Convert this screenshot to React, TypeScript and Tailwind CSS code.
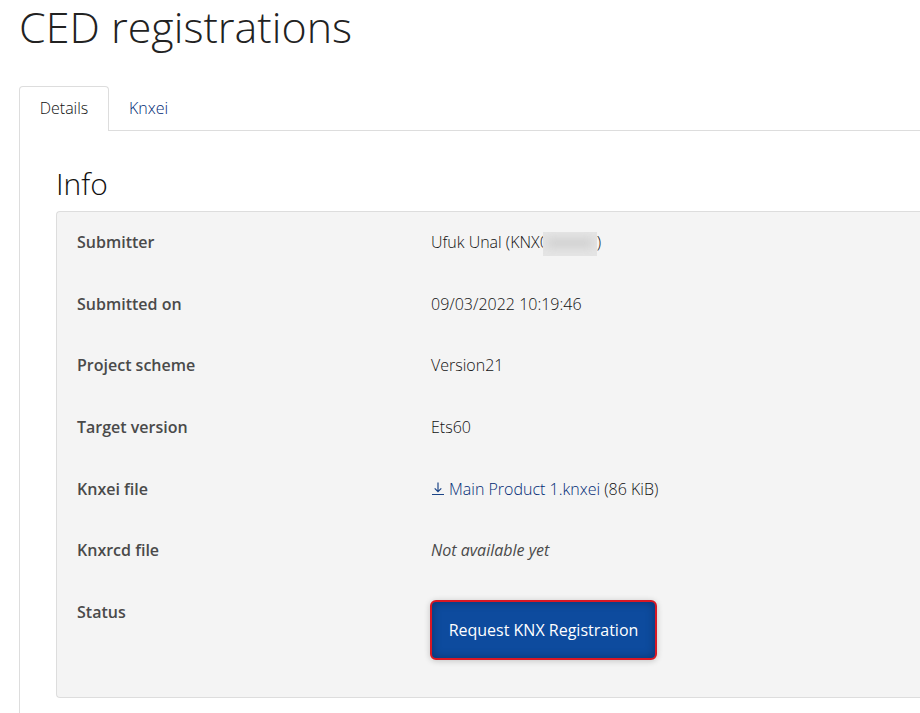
import type { ReactNode } from "react";

const Row = ({ label, children }: { label: string; children: ReactNode }) => (
  <div className="flex items-start leading-6">
    <dt className="w-[354px] shrink-0 font-semibold text-[#4a4a4a]">{label}</dt>
    <dd className="grow">{children}</dd>
  </div>
);

const DownloadIcon = () => (
  <svg className="mr-1 inline-block h-[14px] w-[14px] align-[-1px]" viewBox="0 0 14 14" fill="none" stroke="#1c4587" strokeWidth="1.2" aria-hidden="true">
    <path d="M7 .5v9M3.7 6.4 7 9.7l3.3-3.3M1 12.5h12" />
  </svg>
);

export default function App() {
  return (
    <main className="flex min-h-screen flex-col bg-white pl-[19px] font-['Open_Sans',sans-serif] text-base font-light text-[#111111]">
      <h1 className="text-[43px] leading-[54px] text-[#222222]">CED registrations</h1>
      <nav className="mt-8 flex h-[45px] border-b border-[#dddddd]">
        <button className="-mb-px w-[90px] rounded-t border border-b-0 border-[#dddddd] bg-white pb-0.5 text-base">Details</button>
        <button className="px-5 text-base text-[#002a75]">Knxei</button>
      </nav>
      <section className="grow border-l border-[#dddddd] pl-9 pt-[31px]">
        <h2 className="text-[30px] leading-[44px] text-[#111111]">Info</h2>
        <dl className="mt-[5px] flex h-[487px] flex-col justify-between rounded-l border border-r-0 border-[#dddddd] bg-[#f4f4f4] pb-[37px] pl-5 pt-[18px]">
          <Row label="Submitter">
            <span className="flex h-6">
              Ufuk Unal (KNX0
              <span className="relative -ml-[6px] mt-0.5 h-6 w-[54px] overflow-hidden bg-[#e5e5e5]">
                <span className="absolute inset-x-1 top-1.5 h-2.5 bg-[#d0d0d0] blur-[5px]" />
              </span>
              )
            </span>
          </Row>
          <Row label="Submitted on">09/03/2022 10:19:46</Row>
          <Row label="Project scheme">Version21</Row>
          <Row label="Target version">Ets60</Row>
          <Row label="Knxei file">
            <a href="#knxei" className="text-[#002a75]"><DownloadIcon />Main Product 1.knxei</a> (86 KiB)
          </Row>
          <Row label="Knxrcd file"><em className="font-normal text-[#4a4a4a]">Not available yet</em></Row>
          <Row label="Status">
            <button className="-ml-px block h-[60px] w-[227px] rounded-md border-2 border-[#d81824] bg-[#0d4b9e] text-base font-normal text-white shadow-[0_1px_6px_rgba(0,0,0,0.2),inset_0_0_10px_rgba(0,0,0,0.3)]">Request KNX Registration</button>
          </Row>
        </dl>
      </section>
    </main>
  );
}
